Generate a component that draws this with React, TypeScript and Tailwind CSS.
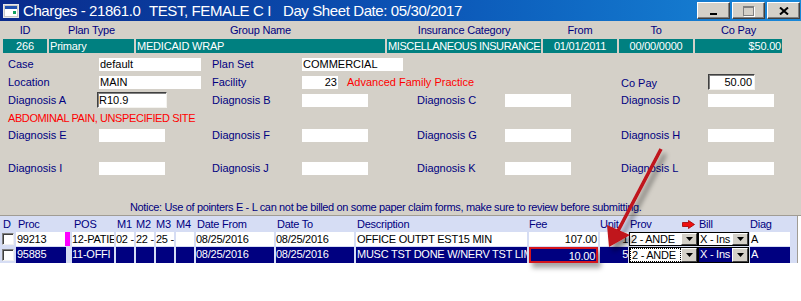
import type { ReactNode } from "react";

// column grid for the charge lines (widths measured from the old form)
const lineCols =
  "grid grid-cols-[14px_54px_42px_18px_18px_18px_18px_78px_78px_171px_69px_28px_67px_49px_40px] gap-x-[2px]";
const formCols = "grid grid-cols-[91px_113px_90px_115px_88px_116px_87px_1fr] pl-[8px] items-center";
const sunken =
  "border border-t-[#404040] border-l-[#404040] border-r-[#f4f3ef] border-b-[#f4f3ef] shadow-[inset_1px_1px_0_#808080]";

function Box({ className = "", children }: { className?: string; children?: ReactNode }) {
  return (
    <div className={`h-[13px] bg-white text-black leading-[13px] px-[1px] whitespace-nowrap overflow-hidden ${className}`}>
      {children}
    </div>
  );
}

function WinBtn({ children }: { children: ReactNode }) {
  return (
    <div className="w-[33px] h-[17px] bg-[#d4d0c8] border border-t-white border-l-white border-r-[#404040] border-b-[#404040] shadow-[inset_-1px_-1px_0_#808080] flex items-center justify-center">
      {children}
    </div>
  );
}

function Cell({ dark, className = "", children }: { dark?: boolean; className?: string; children?: ReactNode }) {
  return (
    <div
      className={`h-full overflow-hidden whitespace-nowrap leading-[14px] ${
        dark ? "bg-[#000080] text-white" : "bg-white text-black"
      } ${className}`}
    >
      {children}
    </div>
  );
}

function Check() {
  return (
    <div className="flex items-center h-full">
      <div className="ml-[2px] w-[12px] h-[12px] bg-white border border-t-[#808080] border-l-[#808080] border-r-[#f0f0f0] border-b-[#f0f0f0] shadow-[inset_1px_1px_0_#404040]" />
    </div>
  );
}

function DropBtn() {
  return (
    <div className="w-[16px] h-full shrink-0 flex items-center justify-center bg-[#d4d0c8] border border-t-white border-l-white border-r-[#404040] border-b-[#404040]">
      <svg width="7" height="4" viewBox="0 0 7 4">
        <polygon points="0,0 7,0 3.5,4" fill="#000" />
      </svg>
    </div>
  );
}

function Combo({ text, dark, focus }: { text: string; dark?: boolean; focus?: boolean }) {
  return (
    <div className="-mx-[1px] h-full flex border border-black bg-white">
      <div
        className={`flex-1 min-w-0 overflow-hidden whitespace-nowrap pl-[1px] leading-[12px] ${
          dark ? "bg-[#000080] text-white" : "bg-white text-black"
        } ${focus ? "border border-dotted border-black leading-[10px]" : ""}`}
      >
        {text}
      </div>
      <DropBtn />
    </div>
  );
}

export default function App() {
  return (
    <div className="relative w-[801px] h-[301px] overflow-hidden flex flex-col bg-[#d4d0c8] font-['Liberation_Sans',Arial,sans-serif] text-[11px] leading-[13px]">
      {/* title bar */}
      <div className="h-[21px] shrink-0 flex items-center bg-linear-to-r from-[#0a2a8c] via-[#0c52b4] to-[#1a88d8] text-white text-[15px] tracking-[-0.4px]">
        <svg className="ml-[3px] shrink-0" width="16" height="14" viewBox="0 0 16 14">
          <rect x="0.5" y="0.5" width="15" height="13" fill="#c8c8c8" stroke="#e8e8e8" />
          <rect x="2" y="2" width="12" height="10" fill="#ffffff" />
          <rect x="2" y="2" width="12" height="3" fill="#2050b0" />
          <rect x="10" y="7" width="3" height="3" fill="#10a060" />
        </svg>
        <span className="ml-[4px] w-[126px] whitespace-nowrap">Charges - 21861.0</span>
        <span className="w-[134px] whitespace-nowrap">TEST, FEMALE C I</span>
        <span className="whitespace-nowrap">Day Sheet Date: 05/30/2017</span>
        <div className="ml-auto mr-[1px] flex gap-[2px]">
          <WinBtn>
            <div className="self-end mb-[3px] w-[7px] h-[2px] bg-black" />
          </WinBtn>
          <WinBtn>
            <div className="w-[11px] h-[10px] border border-[#808080] border-t-2 shadow-[1px_1px_0_#fff]" />
          </WinBtn>
          <WinBtn>
            <svg width="10" height="8" viewBox="0 0 10 8">
              <path d="M1 0.5 L9 7.5 M9 0.5 L1 7.5" stroke="#000" strokeWidth="2" />
            </svg>
          </WinBtn>
        </div>
      </div>

      {/* insurance plan */}
      <div className="mt-[1px] h-[16px] grid grid-cols-[44px_85px_249px_154px_74px_74px_87px] gap-x-[2px] pl-[3px] items-center text-center text-[#000080] tracking-[-0.2px]">
        <span>ID</span>
        <span>Plan Type</span>
        <span>Group Name</span>
        <span>Insurance Category</span>
        <span>From</span>
        <span>To</span>
        <span>Co Pay</span>
      </div>
      <div className="mt-[1px] h-[14px] grid grid-cols-[44px_85px_249px_154px_74px_74px_87px] gap-x-[2px] pl-[3px] text-white leading-[14px] tracking-[-0.2px]">
        <div className="bg-[#008080] text-center">266</div>
        <div className="bg-[#008080] pl-[1px]">Primary</div>
        <div className="bg-[#008080] pl-[1px]">MEDICAID WRAP</div>
        <div className="bg-[#008080] pl-[1px] overflow-hidden whitespace-nowrap tracking-[-0.4px]">MISCELLANEOUS INSURANCE</div>
        <div className="bg-[#008080] text-center">01/01/2011</div>
        <div className="bg-[#008080] text-center">00/00/0000</div>
        <div className="bg-[#008080] text-right pr-[1px]">$50.00</div>
      </div>

      {/* case details */}
      <div className={`${formCols} mt-[4px] h-[15px] text-[#000080]`}>
        <span>Case</span>
        <Box className="w-[102px]">default</Box>
        <span>Plan Set</span>
        <Box className="w-[101px]">COMMERCIAL</Box>
      </div>
      <div className={`${formCols} mt-[2px] h-[16px] text-[#000080]`}>
        <span>Location</span>
        <Box className="w-[102px]">MAIN</Box>
        <span>Facility</span>
        <div className="col-span-3 flex items-center">
          <Box className="w-[36px] text-right">23</Box>
          <span className="ml-[9px] text-[#ff0000] whitespace-nowrap">Advanced Family Practice</span>
        </div>
        <span className="mt-[3px]">Co Pay</span>
        <div className={`w-[47px] h-[16px] bg-white text-black text-right pr-[2px] leading-[14px] ${sunken}`}>50.00</div>
      </div>
      <div className={`${formCols} mt-[2px] h-[16px] text-[#000080]`}>
        <span>Diagnosis A</span>
        <div className={`-ml-[2px] w-[70px] h-[16px] bg-white text-black pl-[1px] leading-[14px] ${sunken}`}>R10.9</div>
        <span>Diagnosis B</span>
        <Box className="w-[66px]" />
        <span>Diagnosis C</span>
        <Box className="w-[66px]" />
        <span>Diagnosis D</span>
        <Box className="w-[66px]" />
      </div>
      <div className="h-[20px] flex items-center pl-[8px] text-[#ff0000] tracking-[-0.4px]">
        ABDOMINAL PAIN, UNSPECIFIED SITE
      </div>
      <div className={`${formCols} h-[15px] text-[#000080]`}>
        <span>Diagnosis E</span>
        <Box className="w-[66px]" />
        <span>Diagnosis F</span>
        <Box className="w-[66px]" />
        <span>Diagnosis G</span>
        <Box className="w-[66px]" />
        <span>Diagnosis H</span>
        <Box className="w-[66px]" />
      </div>
      <div className={`${formCols} mt-[18px] h-[15px] text-[#000080]`}>
        <span>Diagnosis I</span>
        <Box className="w-[66px]" />
        <span>Diagnosis J</span>
        <Box className="w-[66px]" />
        <span>Diagnosis K</span>
        <Box className="w-[66px]" />
        <span>Diagnosis L</span>
        <Box className="w-[66px]" />
      </div>

      <div className="mt-[24px] h-[14px] pl-[130px] text-[#000080] whitespace-nowrap tracking-[-0.35px] leading-[14px]">
        Notice: Use of pointers E - L can not be billed on some paper claim forms, make sure to review before submitting.
      </div>

      {/* charge lines */}
      <div className="mt-[1px] flex-1 bg-white border-t border-[#a09c94] tracking-[-0.25px]">
        <div className="w-[798px] bg-[#d6ddf4] border-r border-[#a09c94] pb-[2px]">
          <div className={`${lineCols} h-[16px] items-center text-[#000080]`}>
            <span className="pl-[3px]">D</span>
            <span className="pl-[2px]">Proc</span>
            <span className="pl-[2px]">POS</span>
            <span className="pl-[1px]">M1</span>
            <span>M2</span>
            <span>M3</span>
            <span>M4</span>
            <span className="pl-[1px]">Date From</span>
            <span className="pl-[1px]">Date To</span>
            <span className="pl-[1px]">Description</span>
            <span>Fee</span>
            <span className="whitespace-nowrap">Unit</span>
            <span className="flex items-center">
              Prov
              <svg className="ml-auto mr-[2px]" width="13" height="9" viewBox="0 0 13 9">
                <polygon points="0.5,2.5 6.5,2.5 6.5,0.5 12.5,4.5 6.5,8.5 6.5,6.5 0.5,6.5" fill="#f01010" stroke="#a00000" strokeWidth="0.8" />
              </svg>
            </span>
            <span>Bill</span>
            <span>Diag</span>
          </div>

          <div className={`${lineCols} h-[14px]`}>
            <Check />
            <div className="flex h-full">
              <Cell className="flex-1 pl-[1px]">99213</Cell>
              <div className="w-[5px] bg-[#ff00ff]" />
            </div>
            <Cell>12-PATIE</Cell>
            <Cell>02 -</Cell>
            <Cell>22 -</Cell>
            <Cell>25 -</Cell>
            <Cell />
            <Cell>08/25/2016</Cell>
            <Cell>08/25/2016</Cell>
            <Cell className="pl-[1px]">OFFICE OUTPT EST15 MIN</Cell>
            <Cell className="text-right pr-[1px]">107.00</Cell>
            <Cell className="text-right">1</Cell>
            <Combo text="2 - ANDE" />
            <Combo text="X - Ins" />
            <Cell className="pl-[1px]">A</Cell>
          </div>

          <div className={`${lineCols} mt-[1px] h-[14px]`}>
            <Check />
            <div className="flex h-full">
              <Cell dark className="w-[50px] pl-[1px]">95885</Cell>
            </div>
            <Cell dark>11-OFFI</Cell>
            <Cell dark />
            <Cell dark />
            <Cell dark />
            <Cell dark />
            <Cell dark>08/25/2016</Cell>
            <Cell dark>08/25/2016</Cell>
            <Cell dark className="pl-[1px]">MUSC TST DONE W/NERV TST LIM</Cell>
            <Cell dark className="text-right pr-[1px] border-2 border-[#d4141c] leading-[10px] shadow-[3px_5px_5px_rgba(0,0,0,0.35)]">
              10.00
            </Cell>
            <Cell dark className="text-right">5</Cell>
            <Combo text="2 - ANDE" focus />
            <Combo text="X - Ins" dark />
            <Cell dark className="pl-[1px]">A</Cell>
          </div>
        </div>
      </div>

      {/* annotation arrow drawn over the form */}
      <svg className="absolute left-0 top-0 pointer-events-none" width="801" height="301">
        <defs>
          <filter id="arrowShadow" x="-50%" y="-50%" width="200%" height="200%">
            <feDropShadow dx="4" dy="5" stdDeviation="2.5" floodColor="#000" floodOpacity="0.45" />
          </filter>
        </defs>
        <g filter="url(#arrowShadow)">
          <line x1="661" y1="149" x2="618" y2="231" stroke="#c0121a" strokeWidth="3.5" />
          <polygon points="609,247 607,225 630,235" fill="#c0121a" />
        </g>
      </svg>
    </div>
  );
}
